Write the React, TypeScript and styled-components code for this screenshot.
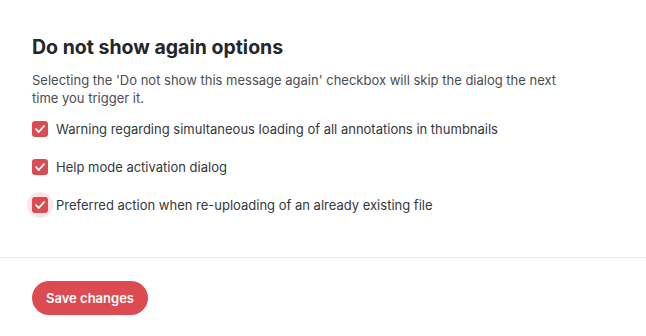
import styled, { createGlobalStyle } from "styled-components";

const GlobalStyle = createGlobalStyle`
    html, body {
        margin: 0;
        padding: 0;
        background: #ffffff;
        font-family: Inter, "Noto Sans", sans-serif;
    }
`;

const options = [
    { label: "Warning regarding simultaneous loading of all annotations in thumbnails", focused: false },
    { label: "Help mode activation dialog", focused: false },
    { label: "Preferred action when re-uploading of an already existing file", focused: true },
];

const Page = styled.div`
    width: 646px;
    height: 336px;
    display: flex;
    flex-direction: column;
    background: #ffffff;
`;

const Section = styled.div`
    padding: 35px 32px 33px;
    display: flex;
    flex-direction: column;
`;

const Title = styled.h2`
    margin: 0 0 12px;
    font-size: 19.5px;
    line-height: 24px;
    font-weight: 700;
    color: #23262b;
`;

const Description = styled.p`
    margin: 0 0 3px;
    max-width: 540px;
    font-size: 13px;
    line-height: 18px;
    color: #4b4d52;
`;

const OptionList = styled.div`
    display: flex;
    flex-direction: column;
`;

const OptionRow = styled.label`
    height: 38px;
    display: flex;
    align-items: center;
    gap: 8px;
    font-size: 13px;
    color: #35383d;
    cursor: pointer;
`;

const Box = styled.span<{ $focused?: boolean }>`
    position: relative;
    width: 16px;
    height: 16px;
    border-radius: 3px;
    background: #dc4b51;
    display: flex;
    align-items: center;
    justify-content: center;
    flex-shrink: 0;

    &::before {
        content: "";
        display: ${(props) => (props.$focused ? "block" : "none")};
        position: absolute;
        left: -5px;
        top: -5px;
        width: 26px;
        height: 26px;
        border-radius: 50%;
        background: rgba(220, 75, 81, 0.14);
    }

    svg {
        position: relative;
    }
`;

const Footer = styled.div`
    border-top: 1px solid #e6e6e6;
    padding: 23px 32px;
`;

const SaveButton = styled.button`
    height: 34px;
    padding: 0 14px;
    border: none;
    border-radius: 17px;
    background: #dc4b51;
    color: #ffffff;
    font-family: Inter, "Noto Sans", sans-serif;
    font-size: 13px;
    font-weight: 600;
    cursor: pointer;
`;

const Check = () => (
    <svg width="12" height="12" viewBox="0 0 12 12" fill="none">
        <path d="M2 6.2 L4.8 9 L10 3.2" stroke="#ffffff" strokeWidth="1.8" strokeLinecap="round" strokeLinejoin="round" />
    </svg>
);

export default function App() {
    return (
        <Page>
            <GlobalStyle />
            <Section>
                <Title>Do not show again options</Title>
                <Description>
                    Selecting the 'Do not show this message again' checkbox will skip the dialog the next time you trigger it.
                </Description>
                <OptionList>
                    {options.map((option) => (
                        <OptionRow key={option.label}>
                            <Box $focused={option.focused}>
                                <Check />
                            </Box>
                            {option.label}
                        </OptionRow>
                    ))}
                </OptionList>
            </Section>
            <Footer>
                <SaveButton>Save changes</SaveButton>
            </Footer>
        </Page>
    );
}
